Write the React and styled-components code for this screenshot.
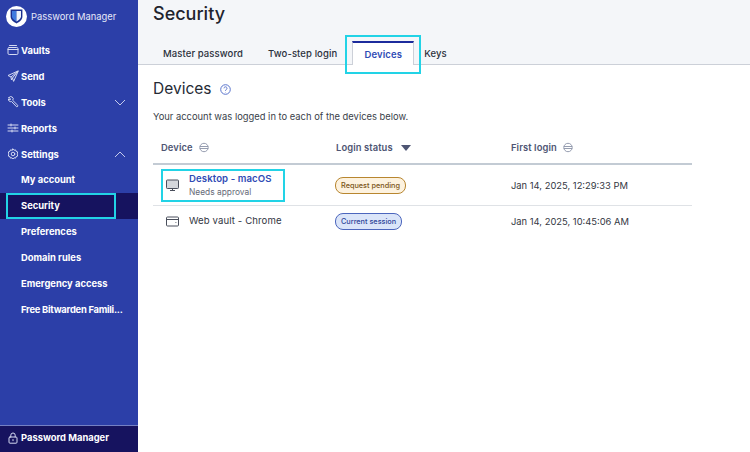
import React from "react";
import styled, { createGlobalStyle } from "styled-components";

const Global = createGlobalStyle`
  html, body { margin: 0; padding: 0; background: #fff; }
  body { font-family: Inter, "Open Sans", sans-serif; }
`;
const Page = styled.div`display: flex; width: 750px; height: 452px; overflow: hidden;`;
const Sidebar = styled.aside`
  width: 138px; flex: none; background: #2c3fa8; color: #fff;
  display: flex; flex-direction: column; height: 452px;
`;
const Brand = styled.div`
  height: 33px; display: flex; align-items: center; gap: 4px; padding-left: 6px; margin-bottom: 4px;
  font-size: 9.4px; color: #e6e9f8; white-space: nowrap;
`;
const LogoDisc = styled.div`
  width: 21px; height: 21px; border-radius: 50%; background: #fff;
  display: flex; align-items: center; justify-content: center; flex: none;
`;
const Nav = styled.nav`flex: 1; display: flex; flex-direction: column;`;
const NavRow = styled.div`
  position: relative; height: 26px; box-sizing: border-box; flex: none; display: flex; align-items: center; gap: 2px;
  padding: 0 12px 0 7px; font-size: 9.4px; font-weight: 700; white-space: nowrap;
  ${p => p.$child && "padding-left: 21px; padding-bottom: 1px;"}
  ${p => p.$active && "background: #16135f;"}
  ${p => p.$tight && "letter-spacing: -0.25px;"}
`;
const NavIcon = styled.svg`
  width: 12px; height: 12px; flex: none;
  fill: none; stroke: #d5daf2; stroke-width: 1; stroke-linecap: round; stroke-linejoin: round;
`;
const Chevron = styled.svg`
  width: 12px; height: 7px; margin-left: auto; fill: none; stroke: #c5cbec; stroke-width: 1;
`;
const SideMark = styled.div`
  position: absolute; left: 6px; top: 0; width: 110px; height: 26px; box-sizing: border-box;
  border: 2px solid #22d3e6;
`;
const Footer = styled.div`
  height: 27px; box-sizing: border-box; border-top: 1px solid #7480c4; background: #16135f;
  display: flex; align-items: center; gap: 2px; padding: 0 0 3px 7px;
  font-size: 9.4px; font-weight: 700; white-space: nowrap;
`;
const Main = styled.main`flex: 1; min-width: 0; display: flex; flex-direction: column;`;
const Header = styled.header`
  height: 65px; box-sizing: border-box; flex: none; background: #f4f6f9; border-bottom: 1px solid #ccd0d8;
  padding-left: 15px; display: flex; flex-direction: column; justify-content: space-between;
`;
const Title = styled.h1`
  margin: 0; padding-top: 3px; font-size: 18px; line-height: 22px; font-weight: 500; color: #1f242e;
`;
const Tabs = styled.div`display: flex; align-items: flex-end; margin-bottom: -1px;`;
const Tab = styled.div`
  position: relative; height: 24px; box-sizing: border-box; display: flex; align-items: center;
  justify-content: center; font-size: 9.5px; font-weight: 500; color: #2b303b; white-space: nowrap;
  padding: ${p => p.$pad || "0 10px"}; letter-spacing: 0.1px;
  ${p => p.$active && `
    width: 62px; padding: 0; color: #2f4bb5; font-weight: 600; background: #fff;
    border: 1px solid #ccd0d8; border-bottom: none; border-top: 2px solid #1c2b9c;
  `}
`;
const TabMark = styled.div`
  position: absolute; left: -8px; top: -8px; width: 76px; height: 39px; box-sizing: border-box;
  border: 2px solid #22d3e6; pointer-events: none;
`;
const Content = styled.section`padding: 14px 58px 0 15px;`;
const Heading = styled.div`
  display: flex; align-items: center; gap: 9px; font-size: 15.5px; line-height: 20px; color: #252a34;
`;
const Help = styled.svg`width: 11px; height: 11px; fill: none; stroke: #5a74cc; stroke-width: 1;`;
const Intro = styled.p`
  margin: 11px 0 0; font-size: 9.4px; line-height: 14px; color: #3a3f4a; white-space: nowrap;
`;
const Table = styled.div`margin-top: 8px; display: flex; flex-direction: column;`;
const Row = styled.div`
  display: grid; grid-template-columns: 175px 175px 1fr; align-items: center;
  border-bottom: ${p => (p.$head ? "2px solid #c3cbd4" : p.$last ? "none" : "1px solid #dfe2e6")};
  height: ${p => (p.$head ? "33px" : p.$last ? "30px" : "41px")};
  box-sizing: border-box;
`;
const HeadCell = styled.div`
  display: flex; align-items: center; gap: 6px; padding-left: 8px;
  font-size: 9.4px; font-weight: 600; color: #4e5573; letter-spacing: 0.1px;
`;
const SortIcon = styled.svg`width: 10px; height: 11px; fill: none; stroke: #8b93a8; stroke-width: 0.9;`;
const Caret = styled.svg`width: 10px; height: 6px; fill: #4e5573; margin-left: 2px;`;
const DeviceCell = styled.div`
  position: relative; display: flex; align-items: center; gap: 9px; padding-left: 12px; height: 100%;
`;
const DeviceIcon = styled.svg`width: 15px; height: 13px; flex: none; fill: none; stroke: #4a4f5c; stroke-width: 1;`;
const DeviceText = styled.div`display: flex; flex-direction: column; gap: 2px;`;
const DeviceName = styled.div`
  font-size: 9.6px; line-height: 12px; letter-spacing: 0.1px; white-space: nowrap;
  color: ${p => (p.$link ? "#2f4bb5" : "#32363f")}; font-weight: ${p => (p.$link ? 600 : 400)};
`;
const DeviceSub = styled.div`font-size: 8.4px; line-height: 10px; color: #666b78;`;
const DeviceMark = styled.div`
  position: absolute; left: 8px; top: 4px; width: 124px; height: 33px; box-sizing: border-box;
  border: 2px solid #22d3e6;
`;
const StatusCell = styled.div`padding-left: 7px; display: flex;`;
const Badge = styled.span`
  height: 15px; padding: 0 5px; border-radius: 8px; display: inline-flex; align-items: center;
  font-size: 7.3px; font-weight: 500; white-space: nowrap;
  background: ${p => (p.$tone === "warn" ? "#fdf2df" : "#dbe5f9")};
  border: 1px solid ${p => (p.$tone === "warn" ? "#b8862f" : "#4c66bd")};
  color: ${p => (p.$tone === "warn" ? "#7b5517" : "#2f4599")};
`;
const DateCell = styled.div`padding-left: 8px; font-size: 9.4px; color: #33373f; white-space: nowrap;`;

const Shield = () => (
  <svg width="13" height="15" viewBox="0 0 13 15">
    <path d="M.6.6h11.800v7.200c0 3-3 5.200-5.900 6.600C3.600 13 .6 10.800.6 7.800z" fill="#1b2f8f" />
    <path d="M2 2h4.500v10.600C4.400 11.400 2 9.700 2 7.600z" fill="#3f7be0" />
    <path d="M6.500 2H11v5.600c0 2.100-2.400 3.800-4.500 5z" fill="#eef3fb" />
  </svg>
);
const icons = {
  vault: <><rect x="1" y="3.500" width="10" height="7" rx="1.200" /><path d="M2.500 1.500h7M1 5.500h10" /></>,
  send: <path d="M11 1 1 5.500l3 1.500L11 1 5.500 8l1 3zM4 7l.5 3 1-2" />,
  tools: <path d="M2 1.500 3.500 3 3 4 1.500 3A2.200 2.200 0 0 0 4.500 5.500l5 5.200a1 1 0 0 0 1.300-1.300L5.700 4.300A2.200 2.200 0 0 0 2 1.500z" />,
  reports: <path d="M1 3h10M1 6h10M1 9h10M4 2v2M8 5v2M5 8v2" />,
  settings: <><circle cx="6" cy="6" r="1.800" /><path d="M6 1l1 1.200 1.600-.3.500 1.500 1.500.5-.3 1.600L11 6l-.7.500.3 1.600-1.500.5-.5 1.500-1.600-.3L6 11l-1-1.200-1.600.3-.5-1.500-1.500-.5.3-1.600L1 6l.7-.5-.3-1.600 1.500-.5.5-1.500 1.600.3z" /></>,
  lock: <><rect x="2" y="5" width="8" height="6.200" rx="1" /><path d="M3.800 5V3.200a2.200 2.200 0 0 1 4.400 0V5M6 7.500v1.200" /></>,
};
const Icon = ({ name }) => <NavIcon viewBox="0 0 12 12">{icons[name]}</NavIcon>;
const Sort = () => (
  <SortIcon viewBox="0 0 10 11">
    <circle cx="5" cy="5.500" r="4.200" />
    <path d="M.8 4.500h8.400M.8 6.500h8.400" />
  </SortIcon>
);

export default function App() {
  return (
    <Page>
      <Global />
      <Sidebar>
        <Brand><LogoDisc><Shield /></LogoDisc>Password Manager</Brand>
        <Nav>
          <NavRow><Icon name="vault" />Vaults</NavRow>
          <NavRow><Icon name="send" />Send</NavRow>
          <NavRow><Icon name="tools" />Tools<Chevron viewBox="0 0 12 7"><path d="M1 1l5 5 5-5" /></Chevron></NavRow>
          <NavRow><Icon name="reports" />Reports</NavRow>
          <NavRow><Icon name="settings" />Settings<Chevron viewBox="0 0 12 7"><path d="M1 6l5-5 5 5" /></Chevron></NavRow>
          <NavRow $child>My account</NavRow>
          <NavRow $child $active>Security<SideMark /></NavRow>
          <NavRow $child>Preferences</NavRow>
          <NavRow $child>Domain rules</NavRow>
          <NavRow $child>Emergency access</NavRow>
          <NavRow $child $tight>Free Bitwarden Famili...</NavRow>
        </Nav>
        <Footer><Icon name="lock" />Password Manager</Footer>
      </Sidebar>
      <Main>
        <Header>
          <Title>Security</Title>
          <Tabs>
            <Tab $pad="0 13px 0 10px">Master password</Tab>
            <Tab $pad="0 15px 0 12px">Two-step login</Tab>
            <Tab $active>Devices<TabMark /></Tab>
            <Tab>Keys</Tab>
          </Tabs>
        </Header>
        <Content>
          <Heading>
            Devices
            <Help viewBox="0 0 11 11">
              <circle cx="5.500" cy="5.500" r="4.800" />
              <path d="M4 4.300a1.500 1.500 0 1 1 2.300 1.300c-.6.300-.8.600-.8 1.200M5.500 8.200v.3" />
            </Help>
          </Heading>
          <Intro>Your account was logged in to each of the devices below.</Intro>
          <Table>
            <Row $head>
              <HeadCell>Device <Sort /></HeadCell>
              <HeadCell>Login status <Caret viewBox="0 0 10 6"><path d="M0 0h10L5 6z" /></Caret></HeadCell>
              <HeadCell>First login <Sort /></HeadCell>
            </Row>
            <Row>
              <DeviceCell>
                <DeviceIcon viewBox="0 0 15 13">
                  <rect x="1.500" y="1" width="12" height="8.500" rx=".8" fill="#d5d7dc" />
                  <path d="M5 11.500h5M7.500 9.500v2" />
                </DeviceIcon>
                <DeviceText>
                  <DeviceName $link>Desktop - macOS</DeviceName>
                  <DeviceSub>Needs approval</DeviceSub>
                </DeviceText>
                <DeviceMark />
              </DeviceCell>
              <StatusCell><Badge $tone="warn">Request pending</Badge></StatusCell>
              <DateCell>Jan 14, 2025, 12:29:33 PM</DateCell>
            </Row>
            <Row $last>
              <DeviceCell>
                <DeviceIcon viewBox="0 0 15 13">
                  <rect x="1.500" y="2" width="12" height="9" rx="1" />
                  <path d="M1.500 4.500h12M10.500 7.500h.8" />
                </DeviceIcon>
                <DeviceName>Web vault - Chrome</DeviceName>
              </DeviceCell>
              <StatusCell><Badge>Current session</Badge></StatusCell>
              <DateCell>Jan 14, 2025, 10:45:06 AM</DateCell>
            </Row>
          </Table>
        </Content>
      </Main>
    </Page>
  );
}
